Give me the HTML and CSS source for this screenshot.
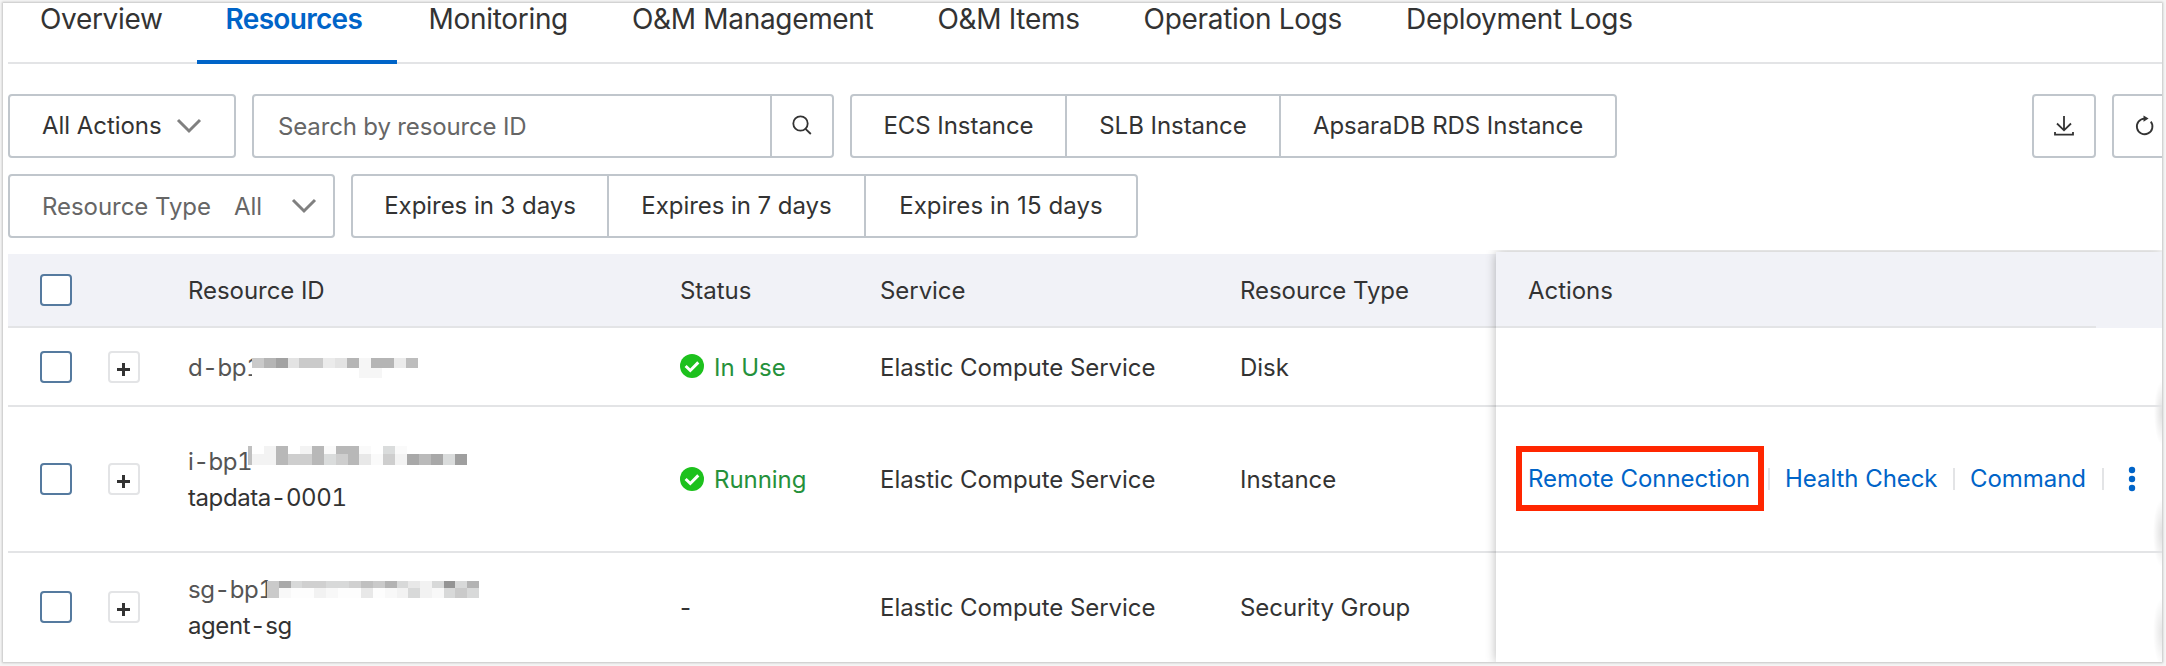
FILE: index.html
```html
<!DOCTYPE html>
<html lang="en">
<head>
<meta charset="utf-8">
<title>Resources</title>
<link rel="stylesheet" href="styles.css">
</head>
<body>
<main class="panel">
  <nav class="tabs">
    <a class="tab">Overview</a>
    <a class="tab active">Resources</a>
    <a class="tab">Monitoring</a>
    <a class="tab">O&amp;M Management</a>
    <a class="tab">O&amp;M Items</a>
    <a class="tab">Operation Logs</a>
    <a class="tab">Deployment Logs</a>
  </nav>

  <section class="filters">
    <div class="line">
      <button class="box actions-menu"><span>All Actions</span>
        <svg class="chev" width="26" height="16" viewBox="0 0 26 16"><path d="M2 2 L13 13 L24 2"/></svg>
      </button>
      <div class="box search"><span class="placeholder">Search by resource ID</span>
        <span class="search-btn"><svg class="ico" width="20" height="20" viewBox="0 0 20 20"><circle cx="8.5" cy="8.5" r="7.2"/><path d="M13.5 13.8 L18.8 19"/></svg></span>
      </div>
      <div class="box group"><span class="w-ecs">ECS Instance</span><span class="w-slb">SLB Instance</span><span class="w-rds">ApsaraDB RDS Instance</span></div>
      <div class="tools">
        <button class="box tool"><svg class="ico" width="20" height="20" viewBox="0 0 20 20"><path d="M10 0 V14 M3 7.5 L10 14.3 L17 7.5 M1 16 V18.7 H19 V16"/></svg></button>
        <button class="box tool"><svg class="ico" width="20" height="20" viewBox="0 0 20 20"><path d="M16.8 5.6 A7.8 7.8 0 1 1 10.5 2.6"/><path class="solid" d="M9.5 -0.4 L14.6 2.5 L9.5 5.7 Z"/></svg></button>
      </div>
    </div>
    <div class="line">
      <button class="box type-menu"><span class="placeholder">Resource Type</span><span class="placeholder value">All</span>
        <svg class="chev" width="26" height="16" viewBox="0 0 26 16"><path d="M2 2 L13 13 L24 2"/></svg>
      </button>
      <div class="box group"><span class="w-d3">Expires in 3 days</span><span class="w-d7">Expires in 7 days</span><span class="w-d15">Expires in 15 days</span></div>
    </div>
  </section>

  <section class="table">
    <div class="cols">
      <div class="row head"><i class="check"></i><span></span><span>Resource ID</span><span>Status</span><span>Service</span><span>Resource Type</span></div>
      <div class="row r1"><i class="check"></i><i class="plus"></i>
        <div class="id"><span class="rid">d-bp1</span>
          <svg class="mosaic m1" width="166" height="20" viewBox="0 0 14 20" preserveAspectRatio="none" shape-rendering="crispEdges"><path fill="#fff" d="M0 0h14v20H0z"/><path fill="#cacaca" d="M0 0h1v10H0zM4 0h2v10H4z"/><path fill="#b5b5b5" d="M1 0h1v10H1zM8 0h1v10H8zM10 0h2v10h-2z"/><path fill="#a2a2a2" d="M2 0h1v10H2z"/><path fill="#e3e3e3" d="M3 0h1v10H3zM7 0h1v10H7z"/><path fill="#ebebeb" d="M6 0h1v10H6zM12 0h1v10h-1z"/><path fill="#f6f6f6" d="M9 0h1v20H9zM10 10h1v10h-1z"/><path fill="#bdbdbd" d="M13 0h1v10h-1z"/></svg>
        </div>
        <span class="status"><svg width="24" height="24" viewBox="0 0 24 24"><circle cx="12" cy="12" r="12" fill="#1dc11d"/><path d="M5.6 12 L10.3 16.5 L18.3 8.4" fill="none" stroke="#fff" stroke-width="3"/></svg>In Use</span>
        <span>Elastic Compute Service</span><span>Disk</span></div>
      <div class="row r2"><i class="check"></i><i class="plus"></i>
        <div class="id"><span class="rid">i-bp1</span><span>tapdata-0001</span>
          <svg class="mosaic m2" width="219" height="19" viewBox="-.33 0 18.33 19" preserveAspectRatio="none" shape-rendering="crispEdges"><path fill="#fff" d="M-.33 0H18v19H-.33z"/><path fill="#c0c0c0" d="M-.33 0H0v19H-.33z"/><path fill="#f3f3f3" d="M0 8h2v11H0zM1 0h1v8H1zM4 0h1v8H4zM12 8h1v11h-1z"/><path fill="#b8b8b8" d="M2 0h1v19H2zM5 0h1v19H5zM7 0h1v8H7zM8 0h1v19H8z"/><path fill="#cecece" d="M3 8h2v11H3zM7 8h1v11H7zM11 8h1v11h-1z"/><path fill="#dadcdc" d="M6 8h1v11H6zM11 0h1v8h-1zM16 8h1v11h-1z"/><path fill="#e8e8e8" d="M9 8h1v11H9z"/><path fill="#fafafa" d="M6 0h1v8H6zM9 0h1v8H9zM10 8h1v11h-1zM12 0h1v8h-1z"/><path fill="#a8a8a8" d="M13 8h1v11h-1zM15 8h1v11h-1z"/><path fill="#bababa" d="M14 8h1v11h-1z"/><path fill="#9f9f9f" d="M17 8h1v11h-1z"/></svg>
        </div>
        <span class="status"><svg width="24" height="24" viewBox="0 0 24 24"><circle cx="12" cy="12" r="12" fill="#1dc11d"/><path d="M5.6 12 L10.3 16.5 L18.3 8.4" fill="none" stroke="#fff" stroke-width="3"/></svg>Running</span>
        <span>Elastic Compute Service</span><span>Instance</span></div>
      <div class="row r3"><i class="check"></i><i class="plus"></i>
        <div class="id"><span class="rid">sg-bp1</span><span>agent-sg</span>
          <svg class="mosaic m3" width="212" height="17" viewBox="0 0 18 17" preserveAspectRatio="none" shape-rendering="crispEdges"><path fill="#fdfdfd" d="M0 0h18v17H0z"/><path fill="#cacaca" d="M0 0h1v17H0zM9 0h1v7H9zM16 7h1v10h-1z"/><path fill="#a9a9a9" d="M1 0h1v7H1z"/><path fill="#d8d9d9" d="M2 0h1v7H2zM5 0h2v7H5zM11 0h1v7h-1zM12 7h1v10h-1zM14 0h1v7h-1zM15 7h1v10h-1zM16 0h1v7h-1zM17 7h1v10h-1z"/><path fill="#d0d0d0" d="M3 0h2v7H3zM7 0h1v7H7z"/><path fill="#c0c0c0" d="M8 0h1v7H8z"/><path fill="#b3b3b3" d="M10 0h1v7h-1zM17 0h1v7h-1z"/><path fill="#e8e8e8" d="M12 0h1v7h-1zM8 7h1v10H8z"/><path fill="#f2f2f2" d="M13 0h1v17h-1zM4 7h1v10H4zM11 7h1v10h-1z"/><path fill="#f8f8f8" d="M1 7h1v10H1zM5 7h1v10H5zM10 7h1v10h-1zM14 7h1v10h-1z"/><path fill="#949494" d="M15 0h1v7h-1z"/></svg>
        </div>
        <span>-</span><span>Elastic Compute Service</span><span>Security Group</span></div>
    </div>
    <div class="fixed">
      <div class="frow head">Actions</div>
      <div class="frow r1"></div>
      <div class="frow r2">
        <a class="remote">Remote Connection<i class="mark"></i></a><i class="sep"></i><a class="health">Health Check</a><i class="sep"></i><a class="command">Command</a><i class="sep"></i>
        <svg class="dots" width="8" height="26" viewBox="0 0 8 26"><circle cx="4" cy="4" r="3.2"/><circle cx="4" cy="13" r="3.2"/><circle cx="4" cy="22" r="3.2"/></svg>
      </div>
      <div class="frow r3"></div>
    </div>
  </section>
</main>
</body>
</html>
```
FILE: styles.css
```css
* { box-sizing: border-box; }
body {
  margin: 0;
  height: 666px;
  padding: 3px 4px 4px 3px;
  background: #f5f5f5;
  color: #333;
  font: 24px/36px Inter, "Liberation Sans", sans-serif;
  letter-spacing: -.05px;
  overflow: hidden;
}
i { font-style: normal; display: block; }
.panel {
  height: 659px;
  background: #fff;
  padding-left: 5px;
  box-shadow: 0 0 2px 1px #c4c4c4;
  overflow: hidden;
}
.tabs {
  display: flex;
  height: 61px;
  border-bottom: 2px solid #e3e4e6;
  font-size: 28px;
  line-height: 33px;
  letter-spacing: -.32px;
}
.tab {
  height: 61px;
  padding: 0 32px;
  white-space: nowrap;
}
.tab.active {
  width: 200px;
  margin-left: 2px;
  padding: 0 0 0 29px;
  color: #0064c8;
  font-weight: 600;
  letter-spacing: -.7px;
  border-bottom: 4px solid #0064c8;
}
.filters {
  display: flex;
  flex-direction: column;
  gap: 16px;
  padding-top: 30px;
}
.line { display: flex; gap: 16px; height: 64px; white-space: nowrap; }
.box {
  height: 64px;
  display: flex;
  align-items: center;
  border: 2px solid #c0c6cc;
  border-radius: 4px;
  background: #fff;
  padding: 0;
  font: inherit;
  letter-spacing: inherit;
  color: inherit;
}
.actions-menu { width: 228px; padding: 0 32px; justify-content: space-between; }
.type-menu { width: 327px; padding: 0 16px 0 32px; }
.type-menu .value { margin-left: 23px; }
.type-menu .chev { margin-left: auto; }
.chev { fill: none; stroke: #808080; stroke-width: 3; flex: none; }
.placeholder { color: #666; padding-top: 2px; }
.search { width: 582px; padding-left: 24px; justify-content: space-between; }
.search .placeholder { letter-spacing: -.15px; }
.search-btn {
  width: 62px;
  height: 60px;
  border-left: 2px solid #c0c6cc;
  display: flex;
  align-items: center;
  justify-content: center;
}
.search-btn .ico { margin-top: -2px; }
.ico { fill: none; stroke: #333; stroke-width: 1.8; overflow: visible; }
.solid { fill: #333; stroke: none; }
.group span { height: 60px; line-height: 60px; text-align: center; }
.group span + span { border-left: 2px solid #c0c6cc; }
.w-ecs { width: 213px; }
.w-slb { width: 214px; }
.w-rds { width: 336px; }
.w-d3 { width: 254px; }
.w-d7 { width: 257px; }
.group .w-d15 { width: 272px; letter-spacing: .1px; }
.tools { display: flex; gap: 16px; margin-left: auto; margin-right: -14px; }
.tool { width: 64px; justify-content: center; }

.table { display: flex; padding-top: 16px; }
.cols { width: 1488px; flex: none; }
.row {
  display: grid;
  grid-template-columns: 68px 80px 492px 200px 360px 1fr;
  align-items: center;
  padding-left: 32px;
  border-bottom: 2px solid #e3e4e6;
  white-space: nowrap;
  line-height: 36px;
}
.row > span, .id { padding-top: 2px; }
.head { height: 74px; background: #f1f2f7; }
.r1 { height: 79px; }
.r2 { height: 146px; }
.r3 { height: 109px; border-bottom: 0; }
.r3 > span, .r3 .id { padding-top: 0; }
.check {
  width: 32px;
  height: 32px;
  border: 2px solid #557a9f;
  border-radius: 4px;
  background: #fff;
}
.r3 .check, .r3 .plus { margin-top: -1px; }
.plus {
  width: 32px;
  height: 32px;
  border: 2px solid #e3e4e6;
  border-radius: 4px;
  background:
    linear-gradient(#333, #333) 7px 15px / 13px 3px no-repeat,
    linear-gradient(#333, #333) 12px 10px / 3px 13px no-repeat,
    #fff;
}
.id {
  position: relative;
  display: flex;
  flex-direction: column;
  font-variant-numeric: tabular-nums;
  letter-spacing: -.42px;
}
.rid { color: #555; }
.mosaic { position: absolute; }
.m1 { left: 64px; top: 10px; }
.m2 { left: 60px; top: 4px; }
.m3 { left: 79px; top: 9px; }
.status { display: flex; align-items: center; gap: 10px; color: #25913b; }
.status svg { margin-top: -3px; }
.fixed {
  flex: 1;
  margin-top: -2px;
  background:
    radial-gradient(8px 32px at 100% 161px, rgba(0, 0, 0, .12), transparent),
    radial-gradient(9px 34px at 100% 281px, rgba(0, 0, 0, .12), transparent),
    radial-gradient(9px 34px at 100% 380px, rgba(0, 0, 0, .1), transparent),
    #fff;
  box-shadow: 0 0 10px rgba(0, 0, 0, .28);
  clip-path: inset(-2px 0 0 -14px);
}
.frow {
  display: flex;
  align-items: center;
  padding-left: 32px;
  border-bottom: 2px solid #e3e4e6;
  white-space: nowrap;
}
.fixed .head {
  height: 76px;
  padding-top: 2px;
  border-bottom: 0;
  background: linear-gradient(#e3e4e6, #e3e4e6) 0 100% / 600px 2px no-repeat, #f1f2f7;
}
.fixed .r3 { border-bottom: 0; }
.frow a { color: #0064c8; position: relative; }
.remote { width: 240px; }
.health { width: 168px; }
.command { width: 132px; }
.sep { width: 2px; height: 22px; background: #e3e4e6; margin-right: 15px; }
.mark {
  position: absolute;
  left: -12px;
  top: -15px;
  width: 248px;
  height: 65px;
  border: 6px solid #ff2600;
}
.dots { fill: #0064c8; margin-left: 9px; }
```
